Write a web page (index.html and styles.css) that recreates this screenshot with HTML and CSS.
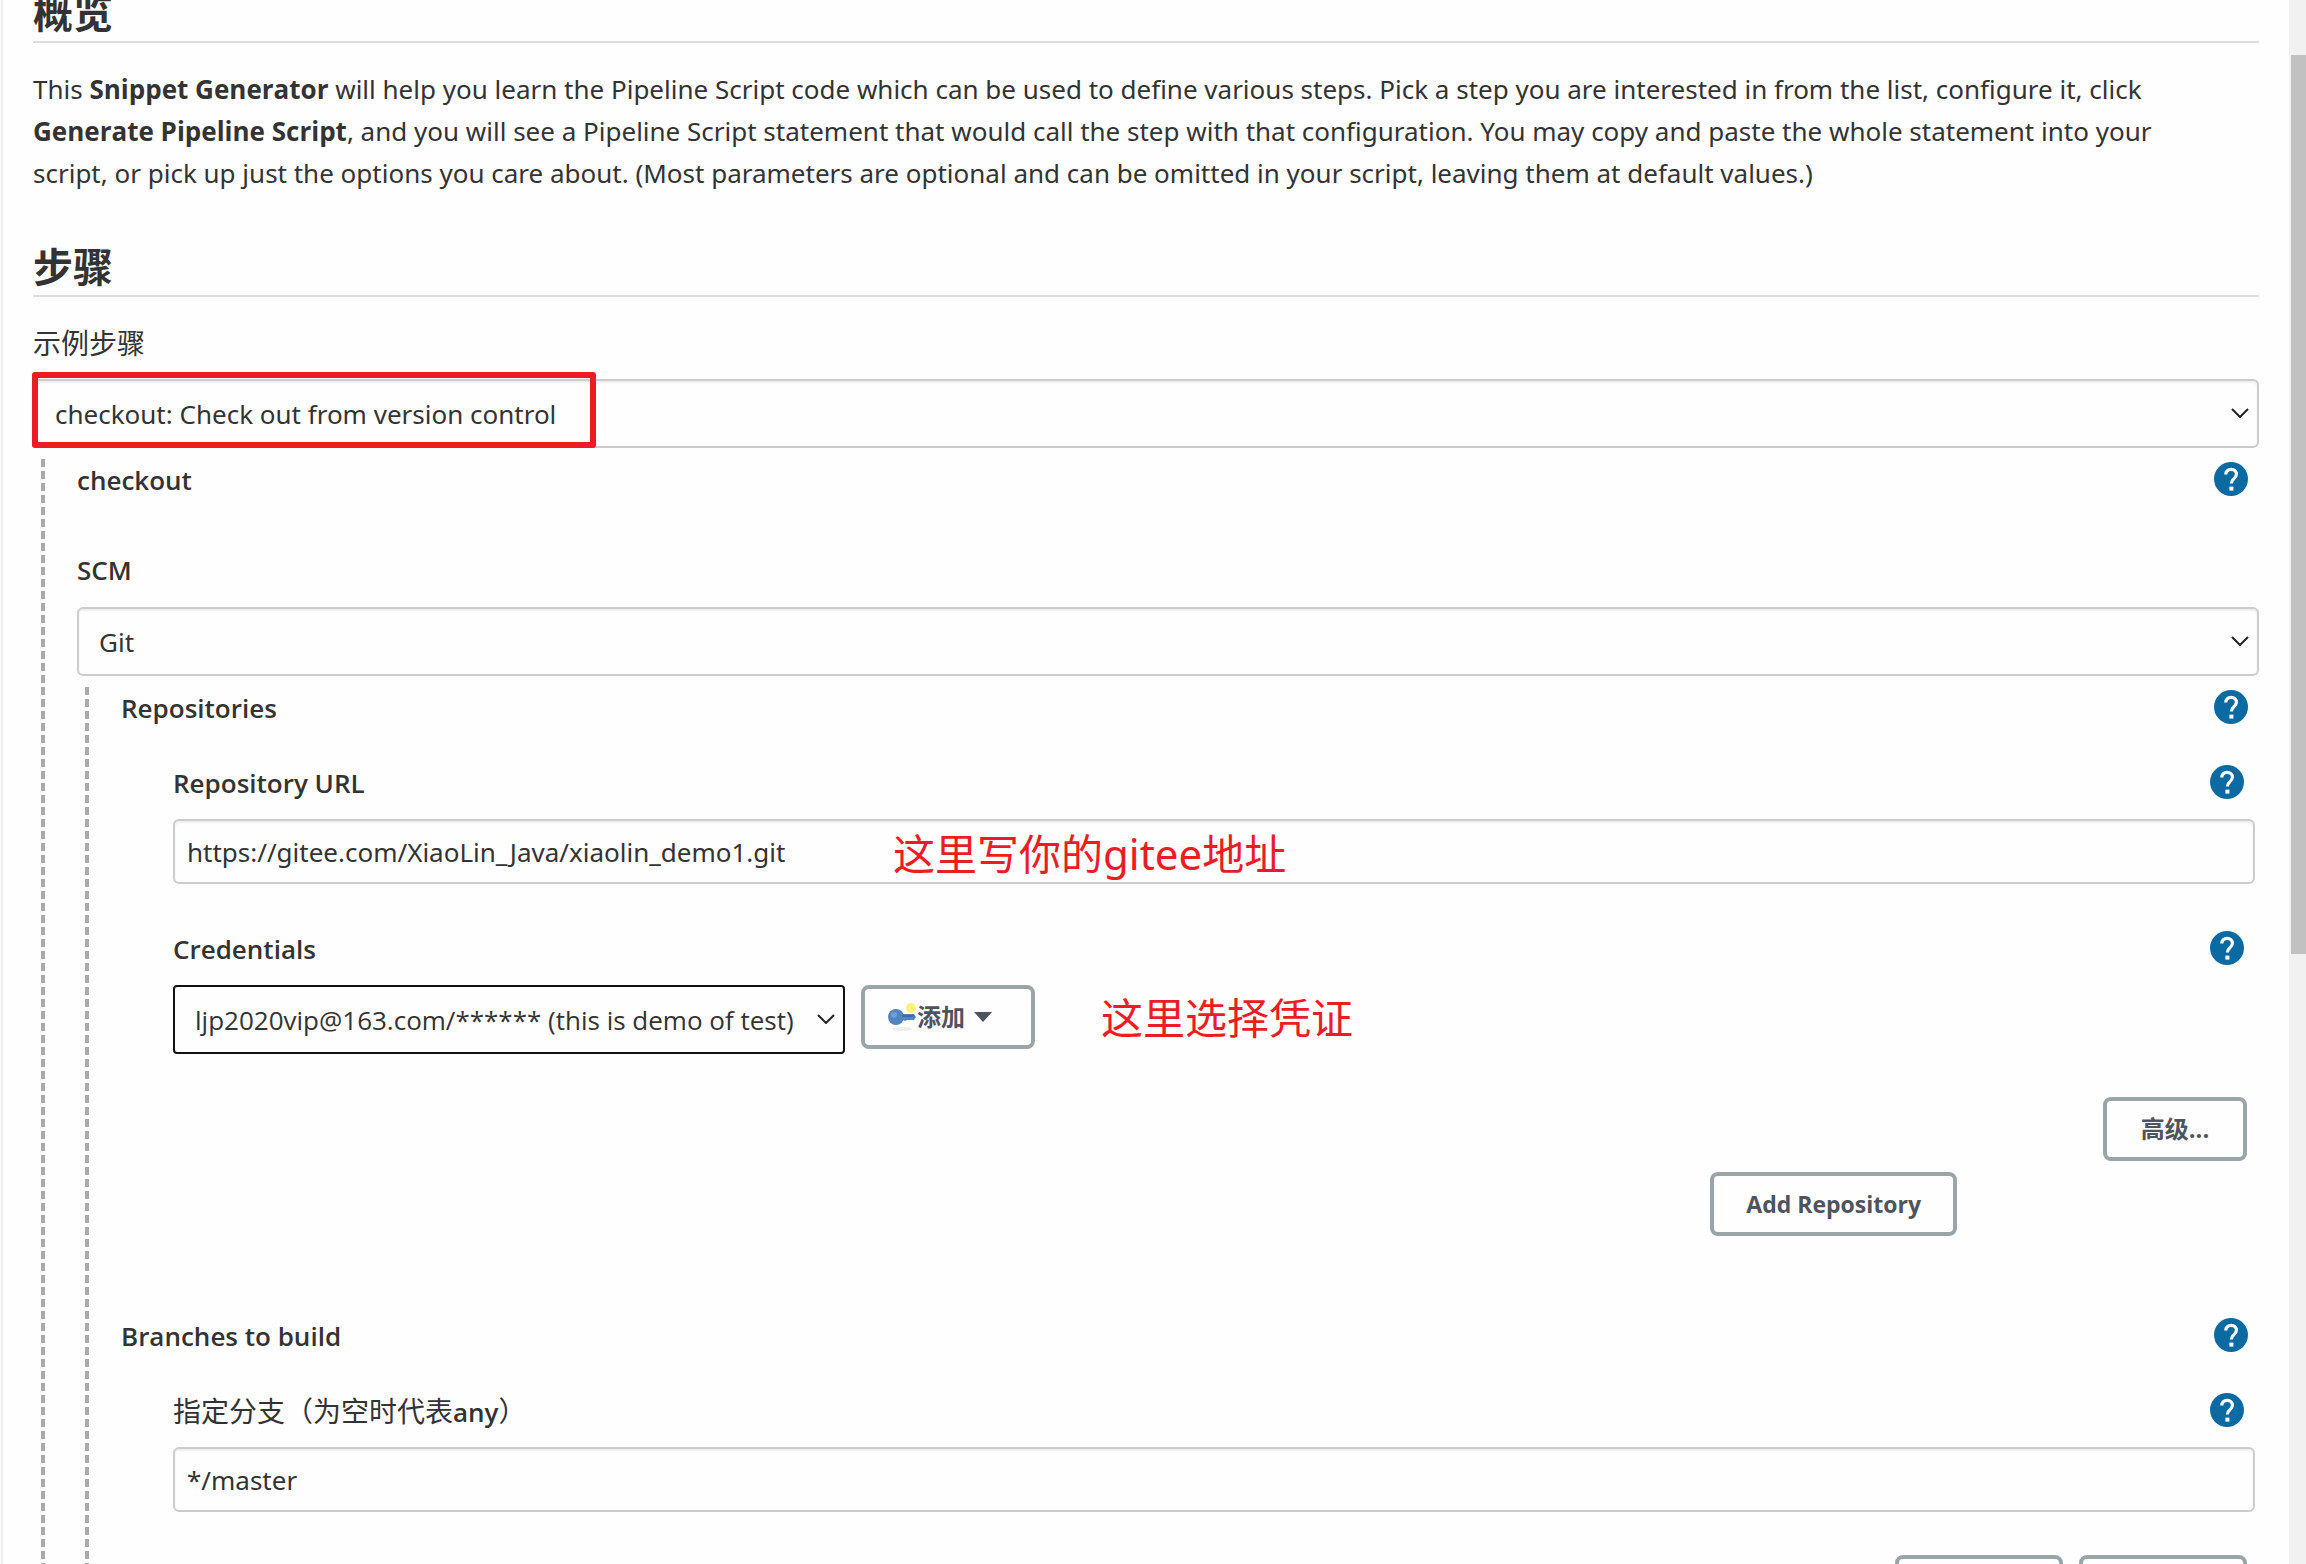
FILE: index.html
```html
<!DOCTYPE html>
<html lang="zh-CN">
<head>
<meta charset="utf-8">
<title>Pipeline Syntax: Snippet Generator</title>
<link rel="stylesheet" href="styles.css">
</head>
<body>
<svg class="defs" width="0" height="0" aria-hidden="true">
  <symbol id="help" viewBox="0 0 34 34">
    <circle cx="17" cy="17" r="17" fill="#0b6aa2"/>
    <path d="M11.8 12.6c0-3.2 2.2-5.3 5.3-5.3 3.100 0 5.300 2 5.300 4.900 0 2.200-1.200 3.400-2.700 4.700-1.600 1.300-2.300 2.200-2.300 4.500" fill="none" stroke="#fff" stroke-width="3.200"/>
    <rect x="15.400" y="24.600" width="4" height="4" fill="#fff"/>
  </symbol>
  <symbol id="chevron" viewBox="0 0 18 10">
    <path d="M1 1l8 8 8-8" fill="none" stroke="#222" stroke-width="2"/>
  </symbol>
</svg>
<div class="page">
  <main class="content">
    <h2>概览</h2>
    <p class="intro">This <strong>Snippet Generator</strong> will help you learn the Pipeline Script code which can be used to define various steps. Pick a step you are interested in from the list, configure it, click<br><strong>Generate Pipeline Script</strong>, and you will see a Pipeline Script statement that would call the step with that configuration. You may copy and paste the whole statement into your<br>script, or pick up just the options you care about. (Most parameters are optional and can be omitted in your script, leaving them at default values.)</p>

    <h2>步骤</h2>
    <div class="row sample"><label class="plain" for="step">示例步骤</label></div>
    <div class="select">
      <select id="step"><option>checkout: Check out from version control</option></select>
      <svg class="chevron"><use href="#chevron"/></svg>
      <span class="highlight"></span>
    </div>

    <section class="group">
      <div class="row"><span class="label">checkout</span><button class="help" type="button" aria-label="Help: checkout"><svg><use href="#help"/></svg></button></div>
      <div class="row scm"><label for="scm">SCM</label></div>
      <div class="select">
        <select id="scm"><option>Git</option></select>
        <svg class="chevron"><use href="#chevron"/></svg>
      </div>

      <section class="group">
        <div class="row"><span class="label">Repositories</span><button class="help" type="button" aria-label="Help: Repositories"><svg><use href="#help"/></svg></button></div>
        <div class="item">
          <div class="row"><label for="url">Repository URL</label><button class="help" type="button" aria-label="Help: Repository URL"><svg><use href="#help"/></svg></button></div>
          <div class="field">
            <input id="url" type="text" value="https://gitee.com/XiaoLin_Java/xiaolin_demo1.git">
            <span class="note over">这里写你的gitee地址</span>
          </div>
          <div class="row next"><label for="cred">Credentials</label><button class="help" type="button" aria-label="Help: Credentials"><svg><use href="#help"/></svg></button></div>
          <div class="credentials">
            <div class="select focused">
              <select id="cred"><option>ljp2020vip@163.com/****** (this is demo of test)</option></select>
              <svg class="chevron"><use href="#chevron"/></svg>
            </div>
            <button class="btn add" type="button">
              <svg class="key" viewBox="0 0 30 30">
                <ellipse cx="15" cy="27" rx="10" ry="2" fill="#eee"/>
                <circle cx="24" cy="6" r="5" fill="#fbf27a"/>
                <circle cx="9" cy="15" r="8" fill="#5285c0"/>
                <path d="M15 12h12l2 3-2 3h-7l-2 1-2-1h-3z" fill="#5285c0"/>
                <circle cx="7" cy="13" r="3" fill="#6f9dd0"/>
                <path d="M15 14h12" stroke="#3c6ba8" stroke-width="2"/>
              </svg>添加<svg class="caret" viewBox="0 0 18 10"><path d="M0 0h18l-9 10z" fill="#4d545d"/></svg>
            </button>
            <span class="note">这里选择凭证</span>
          </div>
          <div class="actions"><button class="btn advanced" type="button">高级...</button></div>
        </div>
        <div class="add-row"><button class="btn" type="button">Add Repository</button></div>

        <div class="row branches"><span class="label">Branches to build</span><button class="help" type="button" aria-label="Help: Branches to build"><svg><use href="#help"/></svg></button></div>
        <div class="item">
          <div class="row"><label for="branch"><span class="plain">指定分支（为空时代表</span>any<span class="plain">）</span></label><button class="help" type="button" aria-label="Help: branch"><svg><use href="#help"/></svg></button></div>
          <div class="field"><input id="branch" type="text" value="*/master"></div>
          <div class="actions"><button class="btn wide" type="button" aria-label="Add Branch"></button><button class="btn wide" type="button" aria-label="Delete Branch"></button></div>
        </div>
      </section>
    </section>
  </main>
  <div class="scrollbar"><div class="thumb"></div></div>
</div>
</body>
</html>
```
FILE: styles.css
```css
* { box-sizing: border-box; }

body {
  margin: 0;
  background: #fefefe;
  color: #333;
  font: 26px/42px "Noto Sans", "Noto Sans CJK SC", sans-serif;
}

.defs { position: absolute; }

.page {
  display: flex;
  height: 100vh;
  overflow: hidden;
}

.content {
  flex: 1;
  min-width: 0;
  height: max-content;
  margin: -15px 0 0 1px;
  padding: 0 30px 60px;
  border-left: 2px solid #eee;
}

h2 {
  margin: 0;
  border-bottom: 2px solid #ddd;
  font-size: 40px;
  line-height: 56px;
  font-weight: 700;
}

.intro { margin: 25px 0 45px; }
.intro strong { font-family: "Open Sans", sans-serif; }

.row {
  display: flex;
  align-items: center;
  justify-content: space-between;
  height: 42px;
}

.row label, .label {
  font-family: "Open Sans", "Noto Sans CJK SC", sans-serif;
  font-weight: 600;
}
.row .plain { font-size: 28px; font-weight: 400; }

.sample { margin-top: 25px; }
.scm { margin-top: 48px; }
.scm + .select { margin-top: 16px; }
.next { margin-top: 44px; }
.branches { margin-top: 79px; }

.help {
  width: 34px;
  height: 34px;
  margin: 0 11px 2px 0;
  padding: 0;
  border: 0;
  background: none;
}

.help svg { display: block; width: 34px; height: 34px; }

.select, .field {
  position: relative;
  margin-top: 15px;
}

select, input {
  display: block;
  width: 100%;
  border: 2px solid #ccc;
  border-radius: 6px;
  background: #fefefe;
  box-shadow: inset 0 2px 2px #eee;
  color: #333;
  font: inherit;
}

select {
  height: 69px;
  padding: 0 50px 0 20px;
  appearance: none;
}

input {
  height: 65px;
  padding: 0 12px;
}

.chevron {
  position: absolute;
  top: 29px;
  right: 10px;
  width: 18px;
  height: 10px;
}

.highlight {
  position: absolute;
  top: -7px;
  left: -1px;
  width: 564px;
  height: 76px;
  border: 6px solid #ed1c24;
  border-radius: 3px;
}

.group {
  margin: 11px 0 0 8px;
  padding-left: 32px;
  border-left: 4px dashed #aaa;
}

.item { padding: 33px 4px 0 52px; }

.note {
  color: #ed1c24;
  font: 42px/66px "Noto Sans", "Noto Sans CJK SC", sans-serif;
  white-space: nowrap;
}

.over {
  position: absolute;
  top: 2px;
  left: 720px;
}

.credentials {
  display: flex;
  align-items: flex-start;
  gap: 16px;
  margin-top: 15px;
}

.credentials .note { margin-left: 50px; }

.focused { width: 672px; margin: 0; }
.focused select {
  border-color: #111;
  border-radius: 4px;
  box-shadow: none;
  font-family: "Open Sans", sans-serif;
}

.btn {
  height: 64px;
  padding: 0 32px;
  border: 4px solid #9aa5a9;
  border-radius: 8px;
  background: #fefefe;
  color: #4d545d;
  font: 700 23px/42px "Open Sans", "Noto Sans CJK SC", sans-serif;
}

.add {
  display: flex;
  align-items: center;
  width: 174px;
  padding: 0 22px;
  font-size: 24px;
}

.key { width: 30px; height: 30px; }
.caret { width: 18px; height: 10px; margin-left: 9px; }

.actions {
  display: flex;
  justify-content: flex-end;
  gap: 16px;
  margin: 43px 8px 0 0;
}

.advanced { width: 144px; font-size: 24px; }
.wide { width: 168px; }

.add-row {
  display: flex;
  justify-content: flex-end;
  margin: 11px 302px 0 0;
}

.scrollbar {
  width: 17px;
  padding: 55px 0 0 2px;
  background: #f1f1f1;
}

.thumb {
  height: 899px;
  background: #c1c1c1;
}
```
